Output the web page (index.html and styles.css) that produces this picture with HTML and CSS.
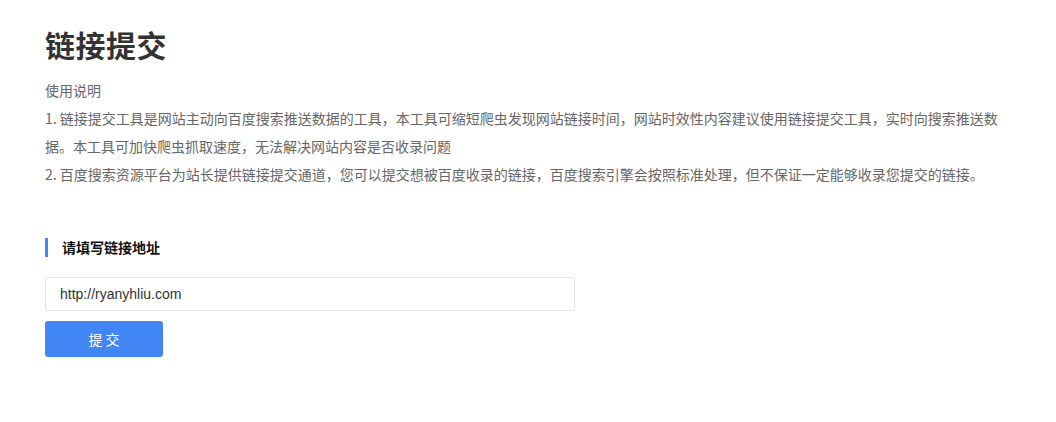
FILE: index.html
```html
<!DOCTYPE html>
<html lang="zh-CN">
<head>
<meta charset="utf-8">
<link rel="stylesheet" href="styles.css">
</head>
<body>
<div class="page">
  <h1 class="title">链接提交</h1>
  <div class="desc">
    <p>使用说明</p>
    <p>1. 链接提交工具是网站主动向百度搜索推送数据的工具，本工具可缩短爬虫发现网站链接时间，网站时效性内容建议使用链接提交工具，实时向搜索推送数据。本工具可加快爬虫抓取速度，无法解决网站内容是否收录问题</p>
    <p>2. 百度搜索资源平台为站长提供链接提交通道，您可以提交想被百度收录的链接，百度搜索引擎会按照标准处理，但不保证一定能够收录您提交的链接。</p>
  </div>
  <div class="section-title">请填写链接地址</div>
  <div class="form">
    <input class="url-input" type="text" value="http://ryanyhliu.com">
    <button class="submit-btn" type="button">提 交</button>
  </div>
</div>
</body>
</html>
```

FILE: styles.css
```css
html, body {
  margin: 0;
  padding: 0;
  background: #fff;
}
body {
  font-family: "Noto Sans CJK SC", "Liberation Sans", sans-serif;
}
.page {
  width: 960px;
  padding: 24px 45px 0 45px;
}
.title {
  margin: 0;
  font-size: 30px;
  line-height: 40px;
  font-weight: 700;
  letter-spacing: 0.5px;
  color: #333;
}
.desc {
  margin-top: 12px;
  font-size: 14px;
  line-height: 28px;
  color: #666;
}
.desc p {
  margin: 0;
}
.section-title {
  margin-top: 50px;
  border-left: 3px solid #4285f4;
  padding-left: 14px;
  font-size: 14px;
  line-height: 19px;
  font-weight: 700;
  color: #111;
}
.form {
  margin-top: 20px;
  display: flex;
  flex-direction: column;
  align-items: flex-start;
  gap: 10px;
}
.url-input {
  box-sizing: border-box;
  width: 530px;
  height: 34px;
  border: 1px solid #e4e4e4;
  border-radius: 2px;
  padding: 0 14px;
  font-family: "Liberation Sans", Arial, sans-serif;
  font-size: 14px;
  color: #333;
  outline: none;
}
.submit-btn {
  width: 118px;
  height: 36px;
  border: none;
  border-radius: 3px;
  background: #4285f4;
  color: #fff;
  font-family: "Noto Sans CJK SC", sans-serif;
  font-size: 14px;
  cursor: pointer;
}
```
